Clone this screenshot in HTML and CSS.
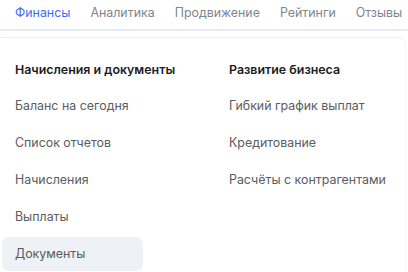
FILE: index.html
```html
<!DOCTYPE html>
<html lang="ru">
  <head>
    <meta charset="UTF-8" />
    <meta name="viewport" content="width=device-width, initial-scale=1.0" />
    <title>Финансы</title>
    <link rel="stylesheet" href="styles.css">
  </head>
  <body>
    <nav class="tabs">
      <a class="tab active">Финансы</a>
      <a class="tab">Аналитика</a>
      <a class="tab">Продвижение</a>
      <a class="tab">Рейтинги</a>
      <a class="tab">Отзывы</a>
    </nav>

    <div class="dropdown">
      <div class="columns">
        <div class="column">
          <div class="column-title">Начисления и документы</div>
          <a class="item">Баланс на сегодня</a>
          <a class="item">Список отчетов</a>
          <a class="item">Начисления</a>
          <a class="item">Выплаты</a>
          <a class="item selected">Документы</a>
        </div>
        <div class="column">
          <div class="column-title">Развитие бизнеса</div>
          <a class="item">Гибкий график выплат</a>
          <a class="item">Кредитование</a>
          <a class="item">Расчёты с контрагентами</a>
        </div>
      </div>
    </div>
  </body>
</html>
```

FILE: styles.css
```css
* {
  margin: 0;
  padding: 0;
  box-sizing: border-box;
}

body {
  font-family: Inter, "Noto Sans", sans-serif;
  font-size: 12.4px;
  background: #ffffff;
  overflow: hidden;
}

.tabs {
  display: flex;
  gap: 20px;
  height: 31px;
  padding: 4px 0 0 15px;
  border-bottom: 2px solid #e6ebf1;
  white-space: nowrap;
}

.tab {
  color: #80858d;
  line-height: 17px;
}

.tab.active {
  color: #3f67ff;
}

.dropdown {
  margin-top: 6px;
  margin-right: 3px;
  border-top: 1px solid #f1f2f4;
  border-top-right-radius: 8px;
  box-shadow: 1px 0 2px rgba(0, 0, 0, 0.04);
  padding: 22px 2px 0;
}

.columns {
  display: grid;
  grid-template-columns: 214px 1fr;
}

.column {
  display: flex;
  flex-direction: column;
  align-items: flex-start;
}

.column-title {
  padding: 0 13px;
  font-weight: 600;
  color: #1c1c1e;
  line-height: 20px;
  margin-bottom: 9px;
}

.item {
  display: block;
  width: 141px;
  height: 34px;
  margin-bottom: 3px;
  padding: 0 13px;
  line-height: 34px;
  color: #595c61;
  border-radius: 7px;
  white-space: nowrap;
}

.column:last-child .item {
  width: auto;
}

.item.selected {
  background: #eef1f6;
}
```
